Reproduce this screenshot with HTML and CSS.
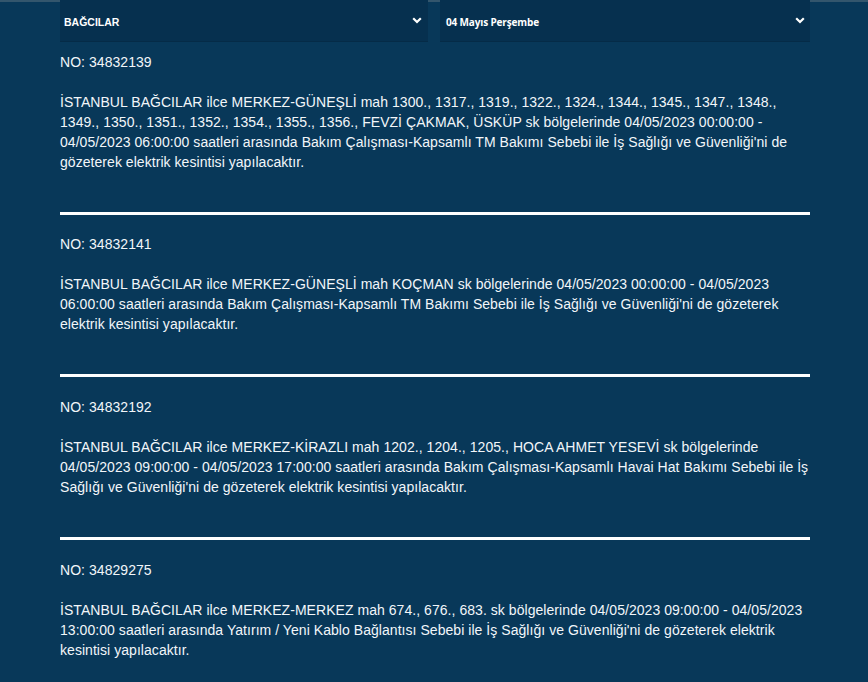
FILE: index.html
```html
<!DOCTYPE html>
<html lang="tr">
<head>
<meta charset="utf-8">
<title>Planlı Kesintiler</title>
<link rel="stylesheet" href="styles.css">
</head>
<body>
<div class="top-strip"></div>
<main class="page">
  <div class="filters">
    <div class="select select-district">
      <span class="select-label">BAĞCILAR</span>
      <svg class="chevron" width="10" height="7" viewBox="0 0 10 7"><path d="M1.2 1.2 L5 5 L8.8 1.2" fill="none" stroke="#fff" stroke-width="2.2"/></svg>
    </div>
    <div class="select select-date">
      <span class="select-label">04 Mayıs Perşembe</span>
      <svg class="chevron" width="10" height="7" viewBox="0 0 10 7"><path d="M1.2 1.2 L5 5 L8.8 1.2" fill="none" stroke="#fff" stroke-width="2.2"/></svg>
    </div>
  </div>

  <section class="outage">
    <p class="outage-no">NO: 34832139</p>
    <p class="outage-text">İSTANBUL BAĞCILAR ilce MERKEZ-GÜNEŞLİ mah 1300., 1317., 1319., 1322., 1324., 1344., 1345., 1347., 1348., 1349., 1350., 1351., 1352., 1354., 1355., 1356., FEVZİ ÇAKMAK, ÜSKÜP sk bölgelerinde 04/05/2023 00:00:00 - 04/05/2023 06:00:00 saatleri arasında Bakım Çalışması-Kapsamlı TM Bakımı Sebebi ile İş Sağlığı ve Güvenliği'ni de gözeterek elektrik kesintisi yapılacaktır.</p>
  </section>
  <hr class="divider">

  <section class="outage">
    <p class="outage-no">NO: 34832141</p>
    <p class="outage-text">İSTANBUL BAĞCILAR ilce MERKEZ-GÜNEŞLİ mah KOÇMAN sk bölgelerinde 04/05/2023 00:00:00 - 04/05/2023 06:00:00 saatleri arasında Bakım Çalışması-Kapsamlı TM Bakımı Sebebi ile İş Sağlığı ve Güvenliği'ni de gözeterek elektrik kesintisi yapılacaktır.</p>
  </section>
  <hr class="divider">

  <section class="outage">
    <p class="outage-no">NO: 34832192</p>
    <p class="outage-text">İSTANBUL BAĞCILAR ilce MERKEZ-KİRAZLI mah 1202., 1204., 1205., HOCA AHMET YESEVİ sk bölgelerinde 04/05/2023 09:00:00 - 04/05/2023 17:00:00 saatleri arasında Bakım Çalışması-Kapsamlı Havai Hat Bakımı Sebebi ile İş Sağlığı ve Güvenliği'ni de gözeterek elektrik kesintisi yapılacaktır.</p>
  </section>
  <hr class="divider">

  <section class="outage">
    <p class="outage-no">NO: 34829275</p>
    <p class="outage-text">İSTANBUL BAĞCILAR ilce MERKEZ-MERKEZ mah 674., 676., 683. sk bölgelerinde 04/05/2023 09:00:00 - 04/05/2023 13:00:00 saatleri arasında Yatırım / Yeni Kablo Bağlantısı Sebebi ile İş Sağlığı ve Güvenliği'ni de gözeterek elektrik kesintisi yapılacaktır.</p>
  </section>
</main>
</body>
</html>
```

FILE: styles.css
```css
html, body {
  margin: 0;
  padding: 0;
}

body {
  background: #083859;
  color: #f2f6f9;
  font-family: "Liberation Sans", Arial, sans-serif;
  font-size: 14px;
  overflow: hidden;
}

.top-strip {
  height: 2px;
  background: #33566d;
}

.page {
  width: 750px;
  margin: -2px 0 0 60px;
}

.filters {
  display: grid;
  grid-template-columns: 368px 370px;
  gap: 12px;
  margin-bottom: 10px;
}

.select {
  height: 42px;
  box-sizing: border-box;
  display: flex;
  align-items: center;
  justify-content: space-between;
  padding: 2px 6px 0 4px;
  background: #06304f;
  border-bottom: 1px solid #052b47;
}

.select-date {
  padding-left: 6px;
  padding-right: 5px;
}

.select-label {
  font-weight: 700;
  font-size: 10px;
  color: #ffffff;
}

.select-district .select-label {
  font-family: "Liberation Sans", Arial, sans-serif;
  font-size: 10.5px;
}

.select-date .select-label {
  font-family: "Open Sans", "Noto Sans", sans-serif;
  letter-spacing: -0.15px;
}

.chevron {
  display: block;
  margin-top: -2px;
}

.outage p {
  margin: 0;
  line-height: 20px;
  letter-spacing: 0.05px;
}

.outage-no {
  margin-bottom: 20px !important;
}

.divider {
  border: 0;
  height: 3px;
  background: #ffffff;
  margin: 40px 0 19px;
}

.divider + .outage ~ .divider + .outage {
  padding-top: 1px;
}
```
